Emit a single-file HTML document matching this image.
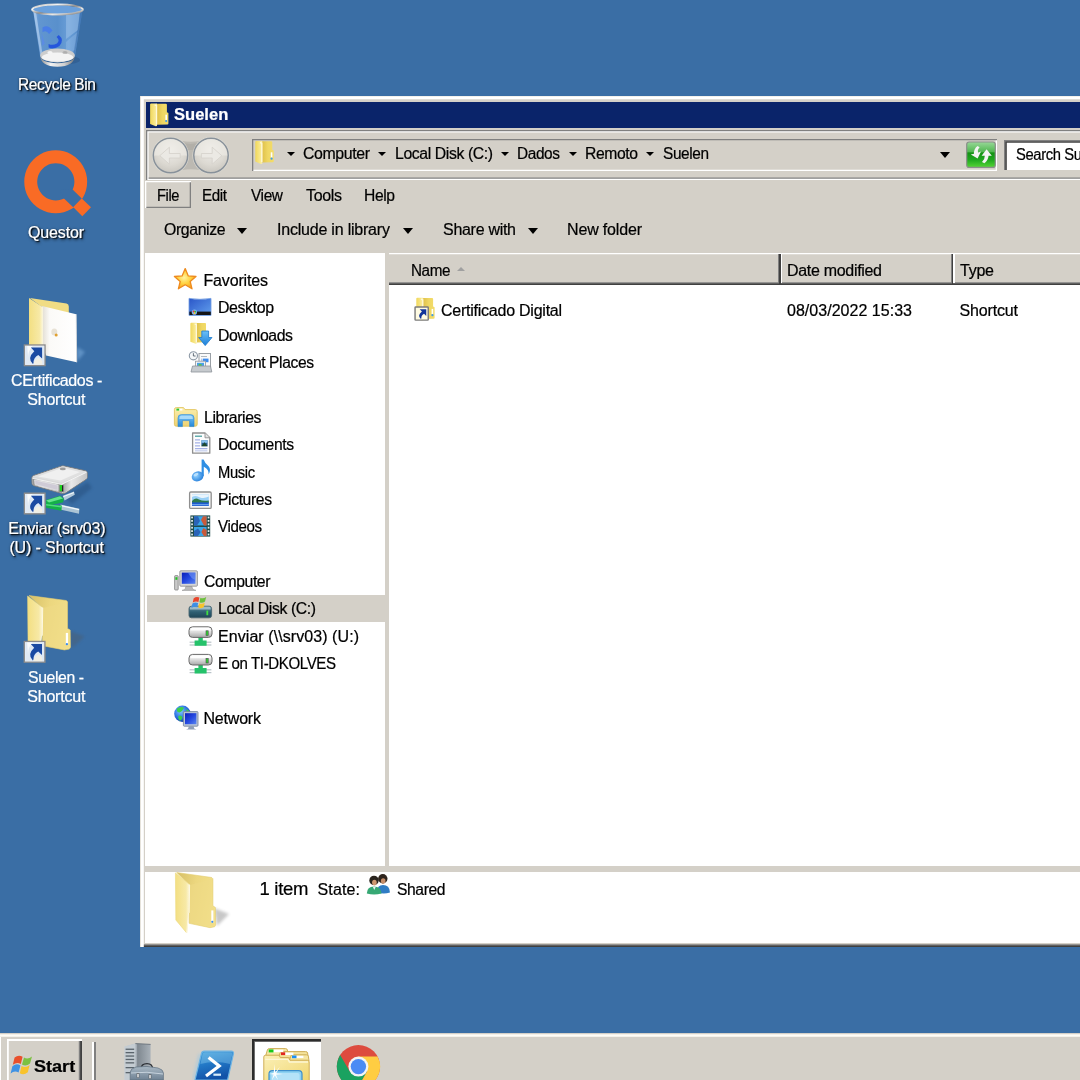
<!DOCTYPE html>
<html lang="en">
<head>
<meta charset="utf-8">
<title>Suelen</title>
<style>
html,body{margin:0;padding:0;}
body{width:1080px;height:1080px;overflow:hidden;background:#3a6ea5;}
#root{position:relative;width:1080px;height:1080px;overflow:hidden;background:#3a6ea5;font-family:"Liberation Sans",sans-serif;font-size:16px;color:#000;}
#root div,#root span,#root svg{position:absolute;}
.t{-webkit-text-stroke:.22px currentColor;white-space:pre;line-height:20px;height:20px;transform:scaleY(1.04);transform-origin:0 15.5px;}
.b{font-weight:bold;}
.w{color:#fff;}
.d{color:#fff;text-shadow:1.4px 1.4px 1.2px rgba(0,0,0,.9),1.4px 1.6px 3px rgba(0,0,0,.65),0 0 2.5px rgba(0,0,0,.4);}
.dn{color:#fff;}
.face{background:#d4d0c8;}
.tri{width:0;height:0;border-left:5.8px solid transparent;border-right:5.8px solid transparent;border-top:6.4px solid #000;}
.tris{width:0;height:0;border-left:4.1px solid transparent;border-right:4.1px solid transparent;border-top:4.9px solid #000;}
</style>
</head>
<body>
<div id="root">



<!-- window frame -->
<div class="face" style="left:139.5px;top:96px;width:950px;height:851.1px;box-shadow:inset 1px .6px 0 #e6e3dc, inset 3.8px 3.3px 0 #fff, inset 0 -1.4px 0 #404040, inset 0 -2.8px 0 #808080;"></div>
<!-- title bar -->
<div style="left:145.5px;top:101.5px;width:940px;height:26px;background:#0a246a;"></div>
<!-- rebar (nav + address) -->
<div style="left:146px;top:130px;width:940px;height:50.2px;box-shadow:inset 0 1.3px 0 #808080, inset 1.3px 0 0 #808080, inset 0 2.6px 0 #fff, inset 2.6px 0 0 #fff, inset 0 -1.3px 0 #fff, inset 0 -2.6px 0 #808080;"></div>
<!-- address box -->
<div style="left:251.5px;top:139.1px;width:745.4px;height:31.6px;background:#d4d0c8;box-shadow:inset 1.3px 1.3px 0 #808080, inset -1.3px -1.3px 0 #fff;"></div>
<!-- search box -->
<div style="left:1003.5px;top:140px;width:90px;height:30px;background:#fff;box-shadow:inset 1.4px 1.4px 0 #808080, inset 2.8px 2.8px 0 #404040, inset -1.3px -1.3px 0 #fff;"></div>
<!-- File menu button (raised) -->
<div style="left:145px;top:180.8px;width:46.4px;height:27.4px;box-shadow:inset 1.3px 1.3px 0 #fff, inset -1.3px -1.3px 0 #808080;"></div>
<!-- nav pane -->
<div style="left:145px;top:252.5px;width:240px;height:613px;background:#fff;"></div>
<div style="left:147px;top:594.5px;width:238px;height:27.5px;background:#d4d0c8;"></div>
<!-- content pane -->
<div style="left:389px;top:252.5px;width:700px;height:613px;background:#fff;"></div>
<!-- header -->
<div class="face" style="left:389px;top:252.5px;width:700px;height:32.5px;box-shadow:inset 0 1.3px 0 #fff, inset 0 -1.4px 0 #404040, inset 0 -2.8px 0 #808080;"></div>
<div style="left:778px;top:253.5px;width:1.4px;height:29px;background:#808080;"></div>
<div style="left:779.4px;top:253.5px;width:1.4px;height:30px;background:#404040;"></div>
<div style="left:780.8px;top:253.5px;width:1.4px;height:29px;background:#fff;"></div>
<div style="left:950.6px;top:253.5px;width:1.4px;height:29px;background:#808080;"></div>
<div style="left:952px;top:253.5px;width:1.4px;height:30px;background:#404040;"></div>
<div style="left:953.4px;top:253.5px;width:1.4px;height:29px;background:#fff;"></div>
<!-- sort arrow -->
<div style="left:456.5px;top:267px;width:0;height:0;border-left:4.5px solid transparent;border-right:4.5px solid transparent;border-bottom:4.5px solid #a0a0a0;"></div>
<!-- details pane -->
<div style="left:145px;top:872px;width:950px;height:70.5px;background:#fff;"></div>
<!-- triangles -->
<div class="tris" style="left:287.3px;top:152.2px;"></div>
<div class="tris" style="left:378.3px;top:152.2px;"></div>
<div class="tris" style="left:501.3px;top:152.2px;"></div>
<div class="tris" style="left:569.3px;top:152.2px;"></div>
<div class="tris" style="left:646.3px;top:152.2px;"></div>
<div class="tri" style="left:939.5px;top:151.7px;border-left-width:5.9px;border-right-width:5.9px;border-top-width:6.8px;"></div>
<div class="tri" style="left:236.5px;top:227.5px;"></div>
<div class="tri" style="left:402.5px;top:227.5px;"></div>
<div class="tri" style="left:527.5px;top:227.5px;"></div>

<!-- taskbar -->
<div class="face" style="left:0;top:1033px;width:1080px;height:48px;box-shadow:inset 0 1.2px 0 #d4d0c8, inset 0 3.8px 0 #fffdf6;"></div>
<!-- start button -->
<div style="left:7px;top:1039px;width:75px;height:45px;box-shadow:inset 1.8px 2px 0 #fff, inset -1.8px 0 0 #404040, inset -3.2px 0 0 #808080;"></div>
<!-- separator -->
<div style="left:92.4px;top:1041.5px;width:2px;height:40px;background:#fff;"></div>
<div style="left:94.4px;top:1041.5px;width:1.8px;height:40px;background:#808080;"></div>
<div style="left:0;top:1037px;width:1.4px;height:44px;background:#fff;"></div>
<!-- active explorer button -->
<div style="left:252px;top:1039.4px;width:69.300px;height:45px;background:#fff;box-shadow:inset 2.200px 2.200px 0 #2c2c2c, inset 3px 3px 0 #808080;"></div>

<svg width="1080" height="1080" viewBox="0 0 1080 1080" style="left:0;top:0">
<defs>
<linearGradient id="gFlap" x1="0" y1="0" x2="1" y2="0"><stop offset="0" stop-color="#f3df82"/><stop offset=".75" stop-color="#f7e9a6"/><stop offset="1" stop-color="#fdf8df"/></linearGradient>
<linearGradient id="gBack" x1="0" y1="0" x2="1" y2="0.3"><stop offset="0" stop-color="#d6bf66"/><stop offset=".5" stop-color="#ecd77f"/><stop offset="1" stop-color="#f3e08a"/></linearGradient>
<linearGradient id="gShadow" x1="0" y1="0" x2="1" y2="0"><stop offset="0" stop-color="#000" stop-opacity=".35"/><stop offset="1" stop-color="#000" stop-opacity="0"/></linearGradient>
<linearGradient id="gSil" x1="0" y1="0" x2="0" y2="1"><stop offset="0" stop-color="#f4f4f4"/><stop offset="1" stop-color="#b8b8b8"/></linearGradient>
<linearGradient id="gSilH" x1="0" y1="0" x2="1" y2="0"><stop offset="0" stop-color="#8a8a8a"/><stop offset=".3" stop-color="#f2f2f2"/><stop offset=".7" stop-color="#d0d0d0"/><stop offset="1" stop-color="#777"/></linearGradient>
<linearGradient id="gBlueArrow" x1="0" y1="0" x2="0" y2="1"><stop offset="0" stop-color="#6cc0f8"/><stop offset="1" stop-color="#1b7fd8"/></linearGradient>
<linearGradient id="gGreenBtn" x1="0" y1="0" x2="0" y2="1"><stop offset="0" stop-color="#98d898"/><stop offset=".38" stop-color="#52b852"/><stop offset=".43" stop-color="#149214"/><stop offset=".7" stop-color="#1fa81f"/><stop offset="1" stop-color="#56d636"/></linearGradient>
<linearGradient id="gScreen" x1="0" y1="0" x2="1" y2="1"><stop offset="0" stop-color="#0a1fb8"/><stop offset=".5" stop-color="#2448e0"/><stop offset="1" stop-color="#5a86f0"/></linearGradient>
<linearGradient id="gDesk" x1="0" y1="0" x2="1" y2="1"><stop offset="0" stop-color="#2a56c8"/><stop offset="1" stop-color="#62a0ee"/></linearGradient>
<linearGradient id="gPS" x1="0" y1="0" x2="0.3" y2="1"><stop offset="0" stop-color="#4aa6de"/><stop offset=".5" stop-color="#2278c6"/><stop offset="1" stop-color="#1252a8"/></linearGradient>
<linearGradient id="gBin" x1="0" y1="0" x2="1" y2="0"><stop offset="0" stop-color="#86b0e2"/><stop offset=".12" stop-color="#6296d0"/><stop offset=".5" stop-color="#5990cc"/><stop offset=".72" stop-color="#6a9fd8"/><stop offset="1" stop-color="#4c84c4"/></linearGradient>
<linearGradient id="gRim" x1="0" y1="0" x2="1" y2="1"><stop offset="0" stop-color="#b0b0b0"/><stop offset=".25" stop-color="#f4f4f4"/><stop offset=".5" stop-color="#8a8a8a"/><stop offset=".7" stop-color="#e8e8e8"/><stop offset="1" stop-color="#6a6a6a"/></linearGradient>
<filter id="fBlur" x="-30%" y="-30%" width="160%" height="160%"><feGaussianBlur stdDeviation="1.6"/></filter>
<linearGradient id="gFront" x1="0" y1="0" x2="1" y2="0"><stop offset="0" stop-color="#8c8c8c"/><stop offset=".3" stop-color="#d2d2d2"/><stop offset=".8" stop-color="#bcbcbc"/><stop offset="1" stop-color="#707070"/></linearGradient>
<linearGradient id="gRight" x1="0" y1="0" x2="1" y2="0"><stop offset="0" stop-color="#a4a4a4"/><stop offset=".35" stop-color="#e9e9e9"/><stop offset="1" stop-color="#c4c4c4"/></linearGradient>
<linearGradient id="gPaper" x1="0" y1="0" x2="1" y2="0"><stop offset="0" stop-color="#e2ddd2"/><stop offset=".22" stop-color="#fbfaf8"/><stop offset="1" stop-color="#ffffff"/></linearGradient>
<linearGradient id="gExpl" x1="0" y1="0" x2="1" y2="1"><stop offset="0" stop-color="#fbf0b8"/><stop offset="1" stop-color="#f0d670"/></linearGradient>
<linearGradient id="gSmFlap" x1="0" y1="0" x2="1" y2="0"><stop offset="0" stop-color="#f1d85a"/><stop offset=".7" stop-color="#f8e88e"/><stop offset="1" stop-color="#fbf0b0"/></linearGradient>
<linearGradient id="gSmBack" x1="0" y1="0" x2="1" y2="0"><stop offset="0" stop-color="#dfc04a"/><stop offset=".5" stop-color="#efd763"/><stop offset="1" stop-color="#f3dc6a"/></linearGradient>
<radialGradient id="gStar" cx=".45" cy=".45" r=".6"><stop offset="0" stop-color="#fff3a0"/><stop offset=".5" stop-color="#ffd23f"/><stop offset="1" stop-color="#f59a1c"/></radialGradient>
<radialGradient id="gNavBtn" cx=".5" cy=".35" r=".7"><stop offset="0" stop-color="#eeece8"/><stop offset=".6" stop-color="#dcd9d2"/><stop offset="1" stop-color="#c6c3bc"/></radialGradient>
<radialGradient id="gGlobe" cx=".4" cy=".35" r=".7"><stop offset="0" stop-color="#7ec8ff"/><stop offset=".6" stop-color="#2a70e0"/><stop offset="1" stop-color="#1038a0"/></radialGradient>
<radialGradient id="gNote" cx=".4" cy=".4" r=".7"><stop offset="0" stop-color="#8fd0ff"/><stop offset="1" stop-color="#1c78d8"/></radialGradient>
<linearGradient id="gDrive" x1="0" y1="0" x2="0" y2="1"><stop offset="0" stop-color="#fafafa"/><stop offset=".5" stop-color="#dcdcdc"/><stop offset="1" stop-color="#a8a8a8"/></linearGradient>
<linearGradient id="gTeal" x1="0" y1="0" x2="0" y2="1"><stop offset="0" stop-color="#6d97a8"/><stop offset=".5" stop-color="#2f5f72"/><stop offset="1" stop-color="#1f4656"/></linearGradient>
<linearGradient id="gLib" x1="0" y1="0" x2="0" y2="1"><stop offset="0" stop-color="#7cc6f6"/><stop offset="1" stop-color="#2588d8"/></linearGradient>
<linearGradient id="gFold2" x1="0" y1="0" x2="0" y2="1"><stop offset="0" stop-color="#fbefb0"/><stop offset="1" stop-color="#eed272"/></linearGradient>
<linearGradient id="gSrv" x1="0" y1="0" x2="1" y2="0"><stop offset="0" stop-color="#c9d0d6"/><stop offset=".45" stop-color="#aab2ba"/><stop offset=".5" stop-color="#7f8890"/><stop offset="1" stop-color="#a9b1b8"/></linearGradient>
<linearGradient id="gBox" x1="0" y1="0" x2="0" y2="1"><stop offset="0" stop-color="#a9b8c4"/><stop offset="1" stop-color="#6f8294"/></linearGradient>
</defs>
<g>
<ellipse cx="63" cy="60" rx="17" ry="4.5" fill="#1a3c66" opacity=".25"/>
<path d="M33 10 L82.5 10 L74.8 57 Q57.5 66 40.2 57 Z" fill="url(#gBin)"/>
<path d="M66 14 L79.5 13 L78 30 L66 39 Z" fill="#a8caee" opacity=".45"/>
<path d="M66 42 L77.5 32 L75 50 L66 54 Z" fill="#a8caee" opacity=".3"/>
<path d="M33.6 12 L36 12 L42.8 56 L40.6 56 Z" fill="#c8def6" opacity=".55"/>
<path d="M82 12 L80.4 12 L73 56 L74.6 56 Z" fill="#2d5f9a" opacity=".35"/>
<ellipse cx="57.5" cy="9.6" rx="24.2" ry="4.2" fill="#6aa0dc"/>
<path d="M42.5 27.5 q5.5 -3.5 10 3 l-3.4 3.4 q-3 -4.4 -6.6 -1.6z" fill="#4a7ee6"/>
<path d="M48.6 44 q4 2 8.4 -.6 q3.4 -3 -.4 -6.4 l2.2 -2 q6 5 .6 11 q-5.6 4 -10.8 1.400z" fill="#2556dc"/>
<path d="M41.6 33 l3.2 10.600 l-2.6 2.400 z" fill="#5a8ae8" opacity=".8"/>
<ellipse cx="57.5" cy="55.4" rx="17.3" ry="7" fill="#cdcdcd"/>
<ellipse cx="57.5" cy="57.2" rx="15.6" ry="4.600" fill="#f3f3f3"/>
<ellipse cx="50" cy="52.600" rx="2.600" ry="1.500" fill="#f4f4f4"/><ellipse cx="65" cy="52.400" rx="2.600" ry="1.500" fill="#9a9a9a" opacity=".6"/>
<path d="M40.2 56 Q40.6 66.200 57.5 66.800 Q74.4 66.200 74.800 56 Q73.600 62.800 57.5 63.200 Q41.400 62.800 40.2 56Z" fill="url(#gSilH)"/>
<ellipse cx="57.5" cy="9.5" rx="25.3" ry="5" fill="none" stroke="url(#gRim)" stroke-width="2.100"/>
</g>
<g fill="#f96b25">
<path fill-rule="evenodd" d="M55.7 150.3 a31.45 31.45 0 1 0 .01 0 Z M55.8 163.2 a18.6 18.6 0 1 1 -.01 0 Z"/>
</g>
<path d="M72.6 189.4 L81.8 198.6 L73.2 207.2 L64 198.6 L60 190 Z" fill="#3a6ea5"/>
<path d="M81.8 198.6 L91 207.2 L82.3 216.2 L73.3 207.2 Z" fill="#f96b25"/>
<g>
<path d="M77 347 L85 352 L77.500 361 Z" fill="#7fb0e0" opacity=".55" filter="url(#fBlur)"/>
<path d="M29.9 298 L66.5 303.5 Q68.8 304 68.8 306.5 L68.8 330 L42 330 L42 307 Z" fill="#f0dc84"/>
<path d="M42 306 L76.2 314.2 L76.7 362.3 L46 355.6 L42 345 Z" fill="url(#gPaper)"/>
<path d="M76.2 314.2 L76.7 362.3" stroke="#dcdcdc" stroke-width=".8"/>
<ellipse cx="54.3" cy="332" rx="3" ry="3.6" fill="#e8e2d6"/><circle cx="56.2" cy="335" r="1.5" fill="#e0a030"/>
<path d="M29 298 L42.9 307.2 L42.9 346 L29 346 Z" fill="url(#gFlap)"/>
</g>
<g transform="translate(23.7,344.3) scale(1.0)"><rect x=".7" y=".7" width="20.6" height="20.6" fill="#f4f7fb" stroke="#8c8c8c" stroke-width="1.4"/><rect x="1.6" y="1.6" width="18.8" height="18.8" fill="#dfe9f4"/><path d="M3.5 1.8 L9 1.8 Q4 7 4.5 14 Z" fill="#fff" opacity=".8"/><path d="M7.2 3.2 L18.4 3.2 L18.4 14.2 L14.6 10.6 Q9.5 13.5 9.8 19 L9.2 19.6 Q3 14 10.6 7 Z" fill="#1a4aa2"/><path d="M10 19.5 Q11 15 15 13.5 L18.5 17 L18.5 20.3 L10.5 20.3Z" fill="#f3f0e2" opacity=".9"/></g>
<g>
<path d="M64 497 L88 482 L92 488 L72 504 Z" fill="#1c3f6c" opacity=".35" filter="url(#fBlur)"/>
<path d="M62.8 495.7 L73.9 491.6 L74.8 494.8 L64.6 500.4 Z" fill="#c3d6e2" opacity=".9"/>
<path d="M63.4 496.6 L74 492.600" stroke="#f2f8fb" stroke-width="1"/>
<path d="M60.5 504.5 L79.4 508.7 L79 513.8 L60 509.6 Z" fill="#b6ccd9" opacity=".92"/>
<path d="M61 505.600 L79 509.600" stroke="#f0f7fb" stroke-width="1.200"/>
<path d="M46.1 499.9 L60 495.7 L63.7 498.5 L63.2 502.2 L52 505 L61.9 505.5 L61.4 510.8 L46.1 507.8 Z" fill="#14b048"/>
<path d="M46.1 500.4 L60 496.2 L63 498.6 L49 502.600Z" fill="#66e48c"/>
<path d="M46.1 504 L61.700 506 L61.600 507.600 L46.1 505.400Z" fill="#4fdc7c"/>
<path d="M31.8 478.1 Q31.800 476.200 33.400 475.600 L61.400 466.100 Q62.800 465.700 64.200 466 L85.600 470.800 Q87.200 471.300 87.300 473 L87.300 477.200 Q87.200 478.600 86 479.400 L66.200 492.600 Q64 494 61.400 493.300 L33.600 485.500 Q32.100 485 32 483.400 Z" fill="#d9d9d9" stroke="#7d7d7d" stroke-width=".9"/>
<path d="M32.7 476.5 L62.8 466.3 L86.4 471.7 L61.9 482.8 Z" fill="#e0e0e0"/>
<path d="M38 476.400 L62.600 467.800 L80 472 L60.500 480.600 Z" fill="#f0f0f0"/>
<ellipse cx="62.8" cy="468.9" rx="3" ry="1.400" fill="#9c9c9c"/>
<path d="M32.4 478.3 L61.4 484.4 L61.9 492.800 L32.7 484.8 Z" fill="url(#gFront)"/>
<path d="M34.5 480 L58.100 485.100 L58.100 490.600 L35 484.600 Z" fill="#cfcbd6" stroke="#f4f4f4" stroke-width=".5"/>
<path d="M62.600 484.200 L86.900 472.400 L86.900 478 L65.200 492.600 L62.900 492.900Z" fill="url(#gRight)"/>
<rect x="59.800" y="485" width="2.300" height="6.200" fill="#1fd21f"/><rect x="62" y="485.200" width="1.300" height="6.400" fill="#222"/>
<path d="M32.4 478.3 L61.4 484.4 L86.600 472.200" fill="none" stroke="#fafafa" stroke-width=".8"/>
</g>
<g transform="translate(23.7,492.5) scale(1.0)"><rect x=".7" y=".7" width="20.6" height="20.6" fill="#f4f7fb" stroke="#8c8c8c" stroke-width="1.4"/><rect x="1.6" y="1.6" width="18.8" height="18.8" fill="#dfe9f4"/><path d="M3.5 1.8 L9 1.8 Q4 7 4.5 14 Z" fill="#fff" opacity=".8"/><path d="M7.2 3.2 L18.4 3.2 L18.4 14.2 L14.6 10.6 Q9.5 13.5 9.8 19 L9.2 19.6 Q3 14 10.6 7 Z" fill="#1a4aa2"/><path d="M10 19.5 Q11 15 15 13.5 L18.5 17 L18.5 20.3 L10.5 20.3Z" fill="#f3f0e2" opacity=".9"/></g>
<g transform="translate(26.1,595.1) scale(1.065,0.985)"><path d="M40 36 L55 42 L43 54 Z" fill="#555" opacity=".32" filter="url(#fBlur)"/><path d="M2.67 .5 L37.67 5.5 L38.92 6.75 L38.92 33.83 L41.42 35.5 L41.67 53 L40.58 54.83 L36 55.67 L15.17 51.33 L15.17 12.58 Z" fill="url(#gBack)" stroke="#e3cc70" stroke-width=".6"/><path d="M16 13 L37.5 7 L37.5 34 L40 36 L40 53 L36 54.5 L16 50.5Z" fill="#efdb86" opacity=".55"/><rect x="37.3" y="38.4" width="2.1" height="12.2" fill="#fff"/><circle cx="38.3" cy="49.8" r="1.1" fill="#3d8ef0"/><path d="M1.42 .92 L15.58 12.58 L15.17 40.5 L14.33 41.75 L12.67 60.92 L1.83 48 Z" fill="url(#gFlap)" stroke="#ecd87c" stroke-width=".6"/><path d="M15.58 12.58 L15.17 40.5 L14.33 41.75 L12.67 60.92" fill="none" stroke="#fffbe8" stroke-width="1" opacity=".9"/></g>
<g transform="translate(23.6,640.8) scale(1.0)"><rect x=".7" y=".7" width="20.6" height="20.6" fill="#f4f7fb" stroke="#8c8c8c" stroke-width="1.4"/><rect x="1.6" y="1.6" width="18.8" height="18.8" fill="#dfe9f4"/><path d="M3.5 1.8 L9 1.8 Q4 7 4.5 14 Z" fill="#fff" opacity=".8"/><path d="M7.2 3.2 L18.4 3.2 L18.4 14.2 L14.6 10.6 Q9.5 13.5 9.8 19 L9.2 19.6 Q3 14 10.6 7 Z" fill="#1a4aa2"/><path d="M10 19.5 Q11 15 15 13.5 L18.5 17 L18.5 20.3 L10.5 20.3Z" fill="#f3f0e2" opacity=".9"/></g>
<g transform="translate(149.7,103.4) scale(1.0)"><path d="M7 .3 L16.2 .3 Q17.2 .3 17.2 1.3 L17.2 8.8 L18.7 9.6 L18.7 20.2 Q18.7 21.2 17.7 21.2 L7 21.4 Z" fill="url(#gSmBack)"/><rect x="15.7" y="11.3" width="1.6" height="5.2" fill="#fff"/><circle cx="16.5" cy="17.6" r="1.1" fill="#3d9df0"/><path d="M.4 1.2 Q.4 .2 1.4 .2 L7.3 .2 L7.3 22.6 L6 22.8 L.4 20.5 Z" fill="url(#gSmFlap)"/><path d="M5 1.6 L6.9 2.2 L6.9 21" fill="none" stroke="#fffbe6" stroke-width="1.3" opacity=".8"/></g>
<g transform="translate(254.9,140.9) scale(1.01)"><path d="M7 .3 L16.2 .3 Q17.2 .3 17.2 1.3 L17.2 8.8 L18.7 9.6 L18.7 20.2 Q18.7 21.2 17.7 21.2 L7 21.4 Z" fill="url(#gSmBack)"/><rect x="15.7" y="11.3" width="1.6" height="5.2" fill="#fff"/><circle cx="16.5" cy="17.6" r="1.1" fill="#3d9df0"/><path d="M.4 1.2 Q.4 .2 1.4 .2 L7.3 .2 L7.3 22.6 L6 22.8 L.4 20.5 Z" fill="url(#gSmFlap)"/><path d="M5 1.6 L6.9 2.2 L6.9 21" fill="none" stroke="#fffbe6" stroke-width="1.3" opacity=".8"/></g>
<g transform="translate(174,872) scale(1,1)"><path d="M40 36 L55 42 L43 54 Z" fill="#555" opacity=".32" filter="url(#fBlur)"/><path d="M2.67 .5 L37.67 5.5 L38.92 6.75 L38.92 33.83 L41.42 35.5 L41.67 53 L40.58 54.83 L36 55.67 L15.17 51.33 L15.17 12.58 Z" fill="url(#gBack)" stroke="#e3cc70" stroke-width=".6"/><path d="M16 13 L37.5 7 L37.5 34 L40 36 L40 53 L36 54.5 L16 50.5Z" fill="#efdb86" opacity=".55"/><rect x="37.3" y="38.4" width="2.1" height="12.2" fill="#fff"/><circle cx="38.3" cy="49.8" r="1.1" fill="#3d8ef0"/><path d="M1.42 .92 L15.58 12.58 L15.17 40.5 L14.33 41.75 L12.67 60.92 L1.83 48 Z" fill="url(#gFlap)" stroke="#ecd87c" stroke-width=".6"/><path d="M15.58 12.58 L15.17 40.5 L14.33 41.75 L12.67 60.92" fill="none" stroke="#fffbe8" stroke-width="1" opacity=".9"/></g>
<g transform="translate(415.9,297.6) scale(1.0)"><path d="M7 .3 L16.2 .3 Q17.2 .3 17.2 1.3 L17.2 8.8 L18.7 9.6 L18.7 20.2 Q18.7 21.2 17.7 21.2 L7 21.4 Z" fill="url(#gSmBack)"/><rect x="15.7" y="11.3" width="1.6" height="5.2" fill="#fff"/><circle cx="16.5" cy="17.6" r="1.1" fill="#3d9df0"/><path d="M.4 1.2 Q.4 .2 1.4 .2 L7.3 .2 L7.3 22.6 L6 22.8 L.4 20.5 Z" fill="url(#gSmFlap)"/><path d="M5 1.6 L6.9 2.2 L6.9 21" fill="none" stroke="#fffbe6" stroke-width="1.3" opacity=".8"/></g>
<g transform="translate(414.4,306.3) scale(0.6590909090909091)"><rect x="1" y="1" width="20" height="20" rx="1" fill="#fffbe2" stroke="#7c7c7c" stroke-width="2.2"/><path d="M8 4.600 L18 4.600 L18 14.600 L14.600 11.400 Q10 14 10.600 18.600 L9.400 19 Q4 14 11.400 8 Z" fill="#12349a"/></g>
<g>
<path d="M170.5 137.6 Q191 146 211 137.6 L211 173.4 Q191 165 170.5 173.4 Z" fill="#bcb9b2"/>
<path d="M175 141 Q191 147 206 141 L206 150 L175 150 Z" fill="#aeaba4" opacity=".7"/>
<circle cx="170.5" cy="155.5" r="18.6" fill="#dedbd4" opacity=".9"/>
<circle cx="211" cy="155.5" r="18.6" fill="#dedbd4" opacity=".9"/>
<circle cx="170.5" cy="155.5" r="17.2" fill="url(#gNavBtn)" stroke="#88919a" stroke-width="1.5"/>
<circle cx="211" cy="155.5" r="17.2" fill="url(#gNavBtn)" stroke="#88919a" stroke-width="1.5"/>
<path d="M154 155.5 a16.5 16.5 0 0 1 33 0 Z" fill="#f0eeea" opacity=".55"/>
<path d="M194.5 155.5 a16.5 16.5 0 0 1 33 0 Z" fill="#f0eeea" opacity=".55"/>
<path d="M159.8 155.7 L169.4 147.2 L169.4 153.5 L180.2 153.5 L180.2 158 L169.4 158 L169.4 164.200 Z" fill="#ebe9e4" stroke="#d4d1ca" stroke-width=".8"/>
<path d="M221.800 155.7 L212.200 147.2 L212.200 153.5 L201.400 153.5 L201.400 158 L212.200 158 L212.200 164.200 Z" fill="#ebe9e4" stroke="#d4d1ca" stroke-width=".8"/>
</g>
<g>
<rect x="966.7" y="142" width="28.6" height="25.4" rx="2.5" fill="url(#gGreenBtn)" stroke="#8a8f8a" stroke-width="1.2"/>
<path d="M977.5 146 L979.6 147.2 Q977 150 978.2 152.6 L981 151.6 L977.6 158.4 L970.8 154.6 L974 153.8 Q973.6 149 977.5 146 Z" fill="#f4f4f4"/>
<path d="M986.6 149.2 L991.8 155.8 L988.6 155.8 Q988 160.6 984.4 163.2 L982 162 Q985 159 984.8 155.8 L981.6 155.8 Z" fill="#f4f4f4"/>
</g>
<path d="M185.2 268.6 L188.3 275.9 L196 276.5 L190.2 281.5 L192 288.8 L185.2 284.8 L178.4 288.8 L180.2 281.5 L174.4 276.5 L182.1 275.9 Z" fill="url(#gStar)" stroke="#ee8a1e" stroke-width="1.3" stroke-linejoin="round"/>
<g>
<path d="M189 298.4 Q200 300.2 211 298.4 L211 315.4 L189 315.4 Z" fill="url(#gDesk)" stroke="#6f9be0" stroke-width=".8"/>
<rect x="189.4" y="311.6" width="21.4" height="3.4" fill="#151515"/>
<circle cx="194.4" cy="312.2" r="2.6" fill="#7db4f0"/><circle cx="193.7" cy="311.6" r="1" fill="#e33"/><circle cx="195.2" cy="311.7" r=".9" fill="#3b3"/><circle cx="194.5" cy="313.2" r=".9" fill="#fc3"/>
</g>
<g transform="translate(190,322.6) scale(0.93)"><path d="M7 .3 L16.2 .3 Q17.2 .3 17.2 1.3 L17.2 8.8 L18.7 9.6 L18.7 20.2 Q18.7 21.2 17.7 21.2 L7 21.4 Z" fill="url(#gSmBack)"/><rect x="15.7" y="11.3" width="1.6" height="5.2" fill="#fff"/><circle cx="16.5" cy="17.6" r="1.1" fill="#3d9df0"/><path d="M.4 1.2 Q.4 .2 1.4 .2 L7.3 .2 L7.3 22.6 L6 22.8 L.4 20.5 Z" fill="url(#gSmFlap)"/><path d="M5 1.6 L6.9 2.2 L6.9 21" fill="none" stroke="#fffbe6" stroke-width="1.3" opacity=".8"/></g>
<path d="M201.8 331 L208.6 331 L208.6 337.5 L212 337.5 L205.2 345.6 L198.6 337.5 L201.8 337.5 Z" fill="url(#gBlueArrow)" stroke="#1c78cc" stroke-width=".8"/>
<g>
<rect x="199" y="353.5" width="11.5" height="15" fill="#fafafa" stroke="#9aa0a6" stroke-width="1"/>
<rect x="201" y="356" width="6" height="1" fill="#b0b8c0"/><rect x="203" y="358.6" width="5.5" height="3.6" fill="#3c8cf0"/><rect x="201" y="358.6" width="1.6" height="3.6" fill="#b0c8e8"/>
<rect x="195.5" y="361.2" width="10" height="7.4" fill="#f4f4f4" stroke="#9aa0a6" stroke-width=".9"/>
<rect x="197" y="362.8" width="7" height="4" fill="#4aa0e8"/><rect x="198.6" y="364" width="3" height="2" fill="#58c050"/>
<path d="M192.5 366 L210.5 366 L211.8 372 L191 372 Z" fill="#c6cace" stroke="#8d9399" stroke-width=".8"/>
<circle cx="193.4" cy="355.8" r="4.1" fill="#f6f8fa" stroke="#8d99a6" stroke-width="1.1"/>
<path d="M193.4 353.2 L193.4 356 L195.6 356" fill="none" stroke="#55606c" stroke-width=".9"/>
</g>
<g>
<path d="M174.4 409.5 Q174.4 407.6 176.3 407.6 L183.5 407.6 L185 409.6 L195.4 409.6 Q197.2 409.6 197.2 411.4 L197.2 424.4 Q197.2 426.2 195.4 426.2 L176.3 426.2 Q174.4 426.2 174.4 424.4 Z" fill="url(#gFold2)" stroke="#e2c45c" stroke-width=".9"/>
<rect x="176.4" y="408.7" width="6" height="1.8" fill="#fff"/><rect x="176.4" y="408.6" width="2.8" height="2" fill="#2ec52e"/>
<path d="M178 426.6 L178 418 Q178 414.6 181.4 414.6 L190.6 414.6 Q194 414.6 194 418 L194 426.6 L189.6 426.6 L189.6 420.6 L182.4 420.6 L182.4 426.6 Z" fill="url(#gLib)" stroke="#2a86d6" stroke-width=".6"/>
<path d="M179.4 418 Q179.6 415.8 181.6 415.8 L190.4 415.8 Q192.6 415.8 192.8 418 L192.8 419 L179.4 419Z" fill="#b9e2fb" opacity=".8"/>
</g>
<g>
<path d="M192.6 433 L205 433 L209.8 437.8 L209.8 453.2 L192.6 453.2 Z" fill="#fdfdfd" stroke="#8f8f8f" stroke-width="1.3" stroke-linejoin="round"/>
<path d="M205 433 L205 437.8 L209.8 437.8" fill="#e4e4e4" stroke="#8f8f8f" stroke-width=".9"/>
<rect x="195" y="435.6" width="7" height="1.2" fill="#3f9a9a"/>
<rect x="195" y="439.4" width="5" height="1" fill="#8f9fe0"/><rect x="195" y="442.4" width="5" height="1" fill="#8f9fe0"/><rect x="195" y="445.4" width="5" height="1" fill="#8f9fe0"/><rect x="195" y="448.2" width="12.4" height="1" fill="#8f9fe0"/><rect x="195" y="450.4" width="12.4" height=".9" fill="#b4c0ea"/>
<rect x="201.4" y="440.2" width="6.2" height="6" fill="#2a5f8f"/><rect x="201.4" y="440.2" width="6.2" height="2.6" fill="#8cc4f0"/><path d="M201.4 446.2 L204.5 442.2 L207.6 446.2Z" fill="#1e4a2e"/>
</g>
<g>
<path d="M201.6 459.4 L203.6 459.4 Q205 463.4 208.6 466.2 Q211.4 469.6 208.6 474.6 Q209.2 469.6 203.8 466.8 L203.8 476 L201.6 476 Z" fill="#2f8fe4"/>
<ellipse cx="197.6" cy="476.4" rx="6" ry="4.9" fill="url(#gNote)" transform="rotate(-18 197.6 476.4)"/>
<ellipse cx="196" cy="474.6" rx="2.6" ry="1.4" fill="#c8e8ff" opacity=".8" transform="rotate(-25 196 474.6)"/>
</g>
<g>
<rect x="189.6" y="492" width="21.6" height="16.4" rx="1.2" fill="#f6f6f6" stroke="#8f8f8f" stroke-width="1.3"/>
<rect x="192" y="494.4" width="16.8" height="11.6" fill="#9ad0f6"/>
<path d="M192 497 Q196 494.6 200 497.4 Q204 499 208.8 496.6 L208.8 494.4 L192 494.4Z" fill="#e8f4fd"/>
<path d="M192 501 Q195 496.8 199 499.4 Q203 501.4 208.8 500.4 L208.8 503 L192 503Z" fill="#2e7a4c"/>
<rect x="192" y="502.4" width="16.8" height="3.6" fill="#1d5ad0"/><rect x="192" y="504.2" width="16.8" height="1" fill="#7ab0f0"/>
</g>
<g>
<rect x="190.4" y="515.4" width="19.8" height="21.2" fill="#1f4b4b"/>
<rect x="194" y="516.2" width="12.6" height="9.2" fill="#3aa6e8"/><rect x="194" y="527" width="12.6" height="9" fill="#3aa6e8"/>
<path d="M194 516.2 L198 516.2 L200 521 L197 525.4 L194 525.4Z" fill="#2a64b8"/><path d="M206.6 516.2 L203 516.2 L201 520 L204 525.4 L206.6 525.4Z" fill="#c85a3a"/>
<path d="M194 536 L194 531 L198 528.4 L200.6 532 L198 536Z" fill="#2a64b8"/><path d="M206.6 536 L206.6 530 L203.4 528 L201.4 532 L203.8 536Z" fill="#c85a3a"/>
<g fill="#e8f0f0"><rect x="191.2" y="516.6" width="1.7" height="1.8"/><rect x="191.2" y="520" width="1.7" height="1.8"/><rect x="191.2" y="523.4" width="1.7" height="1.8"/><rect x="191.2" y="526.8" width="1.7" height="1.8"/><rect x="191.2" y="530.2" width="1.7" height="1.8"/><rect x="191.2" y="533.6" width="1.7" height="1.8"/>
<rect x="207.7" y="516.6" width="1.7" height="1.8"/><rect x="207.7" y="520" width="1.7" height="1.8"/><rect x="207.7" y="523.4" width="1.7" height="1.8"/><rect x="207.7" y="526.8" width="1.7" height="1.8"/><rect x="207.7" y="530.2" width="1.7" height="1.8"/><rect x="207.7" y="533.6" width="1.7" height="1.8"/></g>
</g>
<g>
<rect x="174.6" y="575.6" width="3.6" height="14.4" rx=".8" fill="#c9c9c9" stroke="#777" stroke-width=".7"/><rect x="175.4" y="577.2" width="2" height="2.6" fill="#22c322"/>
<path d="M186 586 L191.6 586 L193 589.4 L196 590.4 L182 590.4 L185 589.4 Z" fill="#b9b9b9" stroke="#8a8a8a" stroke-width=".5"/>
<rect x="179.8" y="570.8" width="17.6" height="15.4" rx="1" fill="#d6d6d6" stroke="#8a8a8a" stroke-width=".8"/>
<rect x="181.8" y="572.6" width="13.6" height="11.2" fill="url(#gScreen)"/>
<path d="M188 572.6 L195.4 572.6 L195.4 580 Q191 579 188 572.6Z" fill="#7aa0f4" opacity=".55"/>
</g>
<g>
<path d="M189 608.6 Q189 606.2 191.4 606.2 L209.2 606.2 Q211.6 606.2 211.6 608.6 L211.6 615.4 Q211.6 617.8 209.2 617.8 L191.4 617.8 Q189 617.8 189 615.4 Z" fill="url(#gTeal)" stroke="#4a6470" stroke-width=".9"/>
<path d="M190 608 Q190 606.8 191.6 606.8 L209 606.8 Q210.6 606.8 210.6 608 L210.6 609.4 L190 609.4Z" fill="#a9c4cf" opacity=".85"/>
<rect x="206.4" y="610.6" width="1.8" height="4.6" fill="#3fe03f"/>
<path d="M193.6 598.4 Q196.4 596 199.4 597.6 L198.4 602 Q195.6 600.6 192.8 602.6 Z" fill="#e8452c"/>
<path d="M200.4 597.8 Q203.2 599.2 206.2 597 L205 601.6 Q202.2 603.6 199.4 602.2 Z" fill="#6cbf3c"/>
<path d="M192.4 603.6 Q195.2 601.6 198.2 603 L197.2 607.2 Q194.4 606 191.4 608 Z" fill="#3c8fe6"/>
<path d="M199.2 603.2 Q202 604.6 204.8 602.6 L203.8 607 Q201 609 198.2 607.6 Z" fill="#f6c42c"/>
</g>
<g transform="translate(0,626)">
<rect x="189.6" y="15.6" width="21.8" height="1.2" fill="#b9c3c9"/><rect x="189.6" y="18.4" width="21.8" height="1.2" fill="#b9c3c9"/>
<path d="M198.4 10.6 L202.8 10.6 L202.8 14.4 L206.6 14.4 L206.6 19.8 L194.6 19.8 L194.6 14.4 L198.4 14.4 Z" fill="#25c26a"/>
<path d="M189 4.4 Q189 .8 192.6 .8 L208.4 .8 Q212 .8 212 4.4 L212 8 Q212 11.4 208.4 11.4 L192.6 11.4 Q189 11.4 189 8 Z" fill="url(#gDrive)" stroke="#6a6a6a" stroke-width="1"/>
<path d="M190.4 4 Q190.6 1.8 193 1.8 L208 1.8 Q210.4 1.8 210.6 4 L210.6 4.6 L190.4 4.6Z" fill="#fff" opacity=".9"/>
<rect x="206" y="4.8" width="2.2" height="4.6" fill="#2fd02f" stroke="#4a4a4a" stroke-width=".6"/>
</g>
<g transform="translate(0,653.6)">
<rect x="189.6" y="15.6" width="21.8" height="1.2" fill="#b9c3c9"/><rect x="189.6" y="18.4" width="21.8" height="1.2" fill="#b9c3c9"/>
<path d="M198.4 10.6 L202.8 10.6 L202.8 14.4 L206.6 14.4 L206.6 19.8 L194.6 19.8 L194.6 14.4 L198.4 14.4 Z" fill="#25c26a"/>
<path d="M189 4.4 Q189 .8 192.6 .8 L208.4 .8 Q212 .8 212 4.4 L212 8 Q212 11.4 208.4 11.4 L192.6 11.4 Q189 11.4 189 8 Z" fill="url(#gDrive)" stroke="#6a6a6a" stroke-width="1"/>
<path d="M190.4 4 Q190.6 1.8 193 1.8 L208 1.8 Q210.4 1.8 210.6 4 L210.6 4.6 L190.4 4.6Z" fill="#fff" opacity=".9"/>
<rect x="206" y="4.8" width="2.2" height="4.6" fill="#2fd02f" stroke="#4a4a4a" stroke-width=".6"/>
</g>
<g>
<circle cx="182.4" cy="713.8" r="8.2" fill="url(#gGlobe)"/>
<path d="M177 708.6 Q180.6 706 184 707.8 Q182.6 711.4 179.6 712.4 Q176.4 712.8 177 708.6Z M178.4 716 Q181 714.6 182.6 717.4 Q181.6 720.4 179.6 720.8 Q177.4 718.6 178.4 716Z M186.4 709 Q189.4 710.2 189.8 713 L186.6 712.4Z" fill="#3cd04a"/>
<path d="M188.8 726.4 L193.6 726.4 L194.4 728.8 L196.6 729.6 L186 729.6 L188 728.8 Z" fill="#8fa0b8"/>
<rect x="183.4" y="711.6" width="14.6" height="14.6" rx=".8" fill="#b9c6d8" stroke="#6f7f98" stroke-width=".8"/>
<rect x="185" y="713.2" width="11.4" height="11" fill="url(#gScreen)"/>
</g>
<g>
<circle cx="382.8" cy="878.8" r="4.700" fill="#2e241c"/><path d="M377 892.400 Q377 885 383 885 Q389.600 885 390 892.400 Q384 894.400 377 892.400Z" fill="#2f7cc4"/>
<ellipse cx="383.2" cy="881" rx="2.300" ry="2.800" fill="#c48c68"/>
<circle cx="374" cy="880.4" r="4.700" fill="#2a241e"/><path d="M366.800 893.600 Q367 886.600 374 886.600 Q381 886.600 381.600 893.600 Q374 895.600 366.800 893.600Z" fill="#36a874"/>
<ellipse cx="374.4" cy="882.6" rx="2.300" ry="2.800" fill="#cf9870"/>
<path d="M372.800 886.800 L374.300 890 L375.800 886.800Z" fill="#e8f4ee"/>
</g>
<g>
<path d="M14.6 1057.6 Q18.4 1054.2 22.6 1056.8 L20.8 1064 Q17 1061.6 12.8 1064.8 Z" fill="#e9502c"/>
<path d="M24 1057.4 Q27.8 1059.8 32 1056.4 L30 1063.6 Q26 1066.8 22 1064.6 Z" fill="#7cc142"/>
<path d="M12.4 1066.2 Q16.4 1063 20.4 1065.4 L18.6 1072.6 Q14.6 1070.2 10.6 1073.4 Z" fill="#3e92e4"/>
<path d="M21.6 1066 Q25.6 1068.4 29.6 1065 L27.8 1072.2 Q23.8 1075.6 19.8 1073.2 Z" fill="#f8c32c"/>
</g>
<g>
<path d="M124.6 1046.4 L135.4 1043.6 L150.6 1044.4 L150.6 1080 L124.6 1080 Z" fill="url(#gSrv)"/>
<path d="M124.6 1046.4 L135.4 1043.6 L135.4 1080 L124.6 1080Z" fill="#c4ccd2"/>
<g fill="#5a646c"><rect x="125.6" y="1048.6" width="8.6" height="1.3"/><rect x="125.6" y="1052" width="8.6" height="1.3"/><rect x="125.6" y="1055.4" width="8.6" height="1.3"/><rect x="125.6" y="1058.8" width="8.6" height="1.3"/><rect x="125.6" y="1062.2" width="8.6" height="1.3"/><rect x="125.6" y="1067" width="8.6" height="1.3"/><rect x="125.6" y="1072" width="8.6" height="1.3"/></g>
<path d="M135.4 1043.6 L150.6 1044.4" stroke="#6f7880" stroke-width="1"/>
<path d="M141 1069 Q141 1063.6 147 1063.6 Q152.6 1063.6 152.6 1069" fill="none" stroke="#2c3036" stroke-width="1.3"/>
<path d="M130.2 1072 Q130.6 1068.6 136 1067 Q147 1065.4 158 1068 Q163.4 1069.6 163.4 1073 L163.4 1080 L130.2 1080 Z" fill="url(#gBox)" stroke="#5f7080" stroke-width=".7"/>
<path d="M131 1073 Q147 1071 163 1074" fill="none" stroke="#c6d2dc" stroke-width="1"/>
<rect x="137" y="1073.6" width="2" height="4" fill="#eef2f6" stroke="#4a4a4a" stroke-width=".5"/><rect x="149" y="1074.6" width="2" height="4" fill="#eef2f6" stroke="#4a4a4a" stroke-width=".5"/>
</g>
<g>
<path d="M200 1054 L194 1080" stroke="#8cc4ea" stroke-width="3" opacity=".5" filter="url(#fBlur)"/><path d="M201.4 1053.6 Q202 1051.2 204.4 1051.2 L231.2 1051.2 Q234 1051.2 233.4 1053.8 L227.6 1080 L195 1080 Z" fill="url(#gPS)" stroke="#6db4e4" stroke-width="1.2"/>
<path d="M202.6 1054 Q203 1052.2 205 1052.2 L231 1052.2 Q232.8 1052.2 232.4 1054 L230.2 1064 Q215 1060 200.4 1064 Z" fill="#8cccf0" opacity=".4"/>
<path d="M208.6 1057.4 L219.2 1066 L206 1076" fill="none" stroke="#fff" stroke-width="3.2" stroke-linejoin="miter"/>
<rect x="213.4" y="1073.6" width="7.6" height="2.2" fill="#d8ecfa"/>
</g>
<g><g stroke="#cfae58" stroke-width="1">
<path d="M265.6 1056 L267.4 1050 Q267.8 1048.6 269.4 1048.6 L285.6 1048.6 Q287 1048.6 287.4 1050 L288 1056 Z" fill="#f6e6a2"/>
<path d="M278.6 1058 L280 1053 Q280.4 1051.6 282 1051.6 L305.6 1051.6 Q307.4 1051.6 307.6 1053 L308.2 1058 Z" fill="#f4e29a"/>
<path d="M289.2 1061 L290.8 1056.2 Q291.2 1054.8 292.8 1054.8 L306.4 1054.8 Q308.2 1054.8 308.4 1056.2 L309 1061 Z" fill="#f6e6a2"/>
<path d="M263.8 1057 Q263.8 1055.2 265.6 1055.2 L279 1055.2 L280.4 1057.6 L288.600 1057.6 L290 1060.200 L307.4 1060.200 Q309.2 1060.200 309.2 1062 L309.2 1081 L263.8 1081 Z" fill="url(#gExpl)"/>
</g>
<path d="M265.2 1059.4 L288 1059.4 L289.4 1062 L308 1062" fill="none" stroke="#fdf6d4" stroke-width="1.4"/>
<rect x="268.7" y="1049.6" width="14.600" height="2.600" fill="#fff"/><rect x="268.7" y="1049.4" width="4.800" height="3" fill="#18c818"/>
<rect x="281" y="1052.6" width="12.400" height="2.400" fill="#fff"/><rect x="281" y="1052.3" width="4.200" height="2.800" fill="#e0281e"/>
<rect x="292" y="1055.8" width="11.400" height="2.200" fill="#fff"/><rect x="292" y="1055.5" width="4.500" height="2.700" fill="#1e90f4"/>
<path d="M269 1081 L269 1074 Q269 1070.600 272.400 1070.600 L298.600 1070.600 Q302 1070.600 302 1074 L302 1081 Z" fill="#8ed2f2" stroke="#3d8fcc" stroke-width="1.200"/>
<path d="M271.400 1081 L271.400 1075 Q271.400 1073 273.400 1073 L297.600 1073 Q299.600 1073 299.600 1075 L299.600 1081Z" fill="#b4e2f8"/>
<path d="M274.6 1064 L275.200 1072.400 L280 1066.600 L276.200 1073.200 L283 1074 L276 1074.800 L278 1080 L274.800 1075.400 L272 1080 L273.600 1074.600 L269 1074 L273.600 1073Z" fill="#fff" opacity=".95"/>
</g>
<g>
<circle cx="358.4" cy="1066.6" r="21.6" fill="#dd4b3e"/>
<path d="M357.49 1088.18 A21.6 21.6 0 0 1 340.17 1055.02 L349.74 1071.60 L358.4 1066.6 L367.06 1071.60 Z" fill="#1aa260"/>
<path d="M377.55 1056.60 A21.6 21.6 0 0 1 357.49 1088.18 L367.06 1071.60 L358.4 1066.6 L358.40 1056.60 Z" fill="#ffcd42"/>
<circle cx="358.4" cy="1066.6" r="10.0" fill="#f4f4f4"/>
<circle cx="358.4" cy="1066.6" r="7.7" fill="#4b8bf4"/>
</g>
</svg>

<!-- texts -->
<span class="t w b" style="left:173.7px;top:105.4px;transform:scale(1.035,1.04);">Suelen</span>
<span class="t" style="left:303.0px;top:143.9px;transform:scale(0.993,1.04);letter-spacing:-0.40px;">Computer</span>
<span class="t" style="left:395.0px;top:143.9px;transform:scale(0.987,1.04);letter-spacing:-0.40px;">Local Disk (C:)</span>
<span class="t" style="left:517.0px;top:143.9px;transform:scale(0.963,1.04);letter-spacing:-0.40px;">Dados</span>
<span class="t" style="left:585.0px;top:143.9px;transform:scale(0.981,1.04);letter-spacing:-0.40px;">Remoto</span>
<span class="t" style="left:663.0px;top:143.9px;transform:scale(0.962,1.04);letter-spacing:-0.40px;">Suelen</span>
<span class="t" style="left:1016.0px;top:145.4px;transform:scale(0.923,1.04);letter-spacing:-0.40px;">Search Su</span>
<span class="t" style="left:156.5px;top:185.9px;transform:scale(0.915,1.04);letter-spacing:-0.40px;">File</span>
<span class="t" style="left:202.0px;top:185.9px;transform:scale(0.948,1.04);letter-spacing:-0.40px;">Edit</span>
<span class="t" style="left:251.0px;top:185.9px;transform:scale(0.964,1.04);letter-spacing:-0.40px;">View</span>
<span class="t" style="left:306.0px;top:185.9px;letter-spacing:-0.34px;">Tools</span>
<span class="t" style="left:364.0px;top:185.9px;transform:scale(0.978,1.04);letter-spacing:-0.40px;">Help</span>
<span class="t" style="left:163.5px;top:220.4px;transform:scale(0.990,1.04);letter-spacing:-0.40px;">Organize</span>
<span class="t" style="left:277.0px;top:220.4px;letter-spacing:-0.21px;">Include in library</span>
<span class="t" style="left:443.0px;top:220.4px;letter-spacing:-0.29px;">Share with</span>
<span class="t" style="left:567.0px;top:220.4px;letter-spacing:-0.16px;">New folder</span>
<span class="t" style="left:203.5px;top:270.9px;letter-spacing:-0.16px;">Favorites</span>
<span class="t" style="left:218.0px;top:297.9px;transform:scale(0.995,1.04);letter-spacing:-0.40px;">Desktop</span>
<span class="t" style="left:218.0px;top:325.9px;transform:scale(0.987,1.04);letter-spacing:-0.40px;">Downloads</span>
<span class="t" style="left:218.0px;top:352.9px;transform:scale(0.976,1.04);letter-spacing:-0.40px;">Recent Places</span>
<span class="t" style="left:203.5px;top:407.9px;transform:scale(0.989,1.04);letter-spacing:-0.40px;">Libraries</span>
<span class="t" style="left:218.0px;top:434.9px;transform:scale(0.978,1.04);letter-spacing:-0.40px;">Documents</span>
<span class="t" style="left:218.0px;top:462.9px;transform:scale(0.921,1.04);letter-spacing:-0.40px;">Music</span>
<span class="t" style="left:218.0px;top:489.9px;transform:scale(0.982,1.04);letter-spacing:-0.40px;">Pictures</span>
<span class="t" style="left:218.0px;top:516.9px;transform:scale(0.943,1.04);letter-spacing:-0.40px;">Videos</span>
<span class="t" style="left:203.5px;top:571.9px;transform:scale(0.986,1.04);letter-spacing:-0.40px;">Computer</span>
<span class="t" style="left:218.0px;top:598.9px;transform:scale(0.987,1.04);letter-spacing:-0.40px;">Local Disk (C:)</span>
<span class="t" style="left:218.0px;top:626.9px;letter-spacing:0.07px;">Enviar (\\srv03) (U:)</span>
<span class="t" style="left:218.0px;top:653.9px;transform:scale(0.941,1.04);letter-spacing:-0.40px;">E on TI-DKOLVES</span>
<span class="t" style="left:203.5px;top:708.9px;letter-spacing:-0.20px;">Network</span>
<span class="t" style="left:410.5px;top:260.9px;transform:scale(0.952,1.04);letter-spacing:-0.40px;">Name</span>
<span class="t" style="left:787.0px;top:260.9px;letter-spacing:-0.31px;">Date modified</span>
<span class="t" style="left:960.0px;top:260.9px;letter-spacing:-0.23px;">Type</span>
<span class="t" style="left:441.0px;top:300.9px;letter-spacing:-0.24px;">Certificado Digital</span>
<span class="t" style="left:787.0px;top:300.9px;letter-spacing:0.03px;">08/03/2022 15:33</span>
<span class="t" style="left:959.5px;top:300.9px;letter-spacing:-0.16px;">Shortcut</span>
<span class="t" style="left:259.5px;top:879.0px;transform-origin:0 16.4px;font-size:18.5px;letter-spacing:-0.28px;">1 item</span>
<span class="t" style="left:317.5px;top:879.9px;letter-spacing:0.14px;">State:</span>
<span class="t" style="left:396.5px;top:879.9px;transform:scale(0.978,1.04);letter-spacing:-0.40px;">Shared</span>
<span class="t b" style="left:34.0px;top:1056.7px;transform-origin:0 15.5px;transform:scale(1.144,1.04);font-size:15.8px;">Start</span>
<span class="t d" style="left:18.0px;top:74.9px;transform:scale(0.969,1.04);letter-spacing:-0.40px;">Recycle Bin</span>
<span class="t d" style="left:28.0px;top:222.9px;letter-spacing:-0.15px;">Questor</span>
<span class="t dn" style="left:11.1px;top:370.9px;letter-spacing:-0.36px;">CErtificados -</span>
<span class="t dn" style="left:27.2px;top:389.9px;letter-spacing:-0.18px;">Shortcut</span>
<span class="t d" style="left:8.3px;top:518.9px;letter-spacing:-0.18px;">Enviar (srv03)</span>
<span class="t d" style="left:9.4px;top:537.9px;letter-spacing:-0.12px;">(U) - Shortcut</span>
<span class="t dn" style="left:28.0px;top:667.9px;transform:scale(0.986,1.04);letter-spacing:-0.40px;">Suelen -</span>
<span class="t dn" style="left:27.2px;top:686.9px;letter-spacing:-0.18px;">Shortcut</span>
</div>
</body>
</html>
